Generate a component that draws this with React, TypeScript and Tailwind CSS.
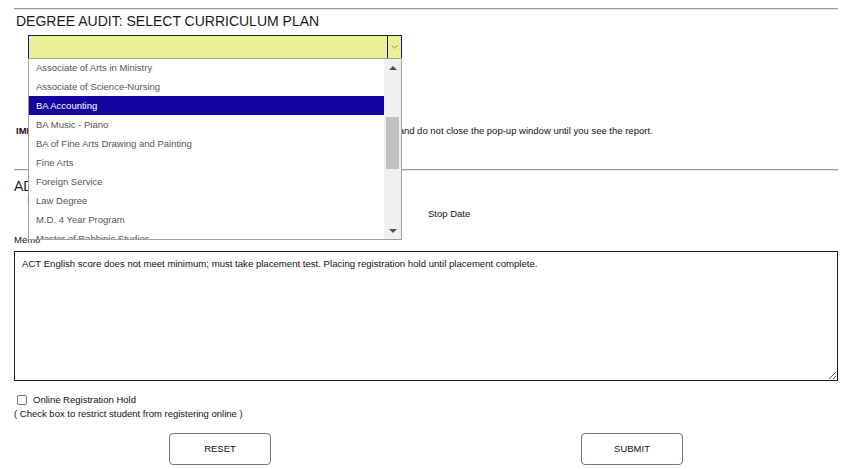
import React from "react";

const items = [
  "Associate of Arts in Ministry",
  "Associate of Science-Nursing",
  "BA Accounting",
  "BA Music - Piano",
  "BA of Fine Arts Drawing and Painting",
  "Fine Arts",
  "Foreign Service",
  "Law Degree",
  "M.D. 4 Year Program",
  "Master of Rabbinic Studies",
];

export default function App() {
  return (
    <div className="w-[850px] h-[469px] bg-white overflow-hidden font-['Liberation_Sans',Arial,sans-serif] text-[#111]">
      <div className="flex flex-col pl-[14px] pr-[12px] pt-[8px]">
        <div className="h-[2px] border-t border-t-[#9a9a9a] border-b border-b-[#e6e6e6]" />
        <div className="mt-[3px] ml-[2px] text-[14px] leading-[16px] text-[#1a1a1a]">
          DEGREE AUDIT: SELECT CURRICULUM PLAN
        </div>

        <div className="relative mt-[6px] ml-[14px] w-[374px] h-[24px] border border-[#1a0f8c] bg-[#e9ef9b] flex">
          <div className="flex-1" />
          <div className="w-[14px] border-l border-[#1a0f8c] flex items-center justify-center">
            <svg width="7" height="4" viewBox="0 0 7 4">
              <path d="M0.5 0.5 L3.5 3.2 L6.5 0.5" stroke="#8a8a8a" strokeWidth="1" fill="none" />
            </svg>
          </div>

          <div className="absolute left-[-1px] top-[22px] w-[374px] h-[182px] border border-[#a0a0a0] bg-white flex z-10">
            <div className="flex-1 overflow-hidden">
              <div className="-mt-px flex flex-col">
                {items.map((t) => (
                  <div
                    key={t}
                    className={
                      t === "BA Accounting"
                        ? "h-[19px] leading-[19px] pl-[7px] text-[9.5px] whitespace-nowrap bg-[#1405a0] text-white"
                        : "h-[19px] leading-[19px] pl-[7px] text-[9.5px] whitespace-nowrap text-[#555]"
                    }
                  >
                    {t}
                  </div>
                ))}
              </div>
            </div>
            <div className="w-[17px] bg-[#f0f0f0] flex flex-col items-center">
              <div className="h-[17px] flex items-center justify-center">
                <svg width="8" height="4" viewBox="0 0 8 4">
                  <path d="M0 4 L4 0 L8 4 Z" fill="#505050" />
                </svg>
              </div>
              <div className="mt-[41px] w-[13px] h-[52px] bg-[#c1c1c1]" />
              <div className="flex-1" />
              <div className="h-[17px] flex items-center justify-center">
                <svg width="8" height="4" viewBox="0 0 8 4">
                  <path d="M0 0 L8 0 L4 4 Z" fill="#505050" />
                </svg>
              </div>
            </div>
          </div>
        </div>

        <div className="mt-[66px] ml-[2px] text-[9.5px] leading-[12px] whitespace-nowrap">
          <span className="font-bold">IMPORTANT:</span> Please click the Submit button only once and wait patiently for these results, and do not close the pop-up window until you see the report.
        </div>

        <div className="mt-[32px] h-[2px] border-t border-t-[#9a9a9a] border-b border-b-[#e6e6e6]" />

        <div className="mt-[7px] text-[14px] leading-[16px] text-[#1a1a1a]">ADD HOLD</div>

        <div className="grid grid-cols-2">
          <div className="pl-[13px] text-[9.5px] leading-[12px]">Start Date</div>
          <div className="pl-[2px] mt-[14px] text-[9.5px] leading-[12px]">Stop Date</div>
        </div>

        <div className="mt-[14px] text-[9.5px] leading-[12px]">Memo</div>
        <textarea
          className="mt-[5px] w-[824px] h-[130px] border border-[#222] px-[7px] py-[6px] text-[9.6px] leading-[12px] text-[#111] outline-none font-['Liberation_Sans',Arial,sans-serif]"
          defaultValue="ACT English score does not meet minimum; must take placement test. Placing registration hold until placement complete."
        />

        <div className="mt-[13px] flex items-center h-[12px] pl-[3px]">
          <span className="w-[10px] h-[10px] border border-[#767676] rounded-[2px] bg-white" />
          <span className="ml-[6px] text-[9.5px] leading-[12px]">Online Registration Hold</span>
        </div>
        <div className="mt-[2px] text-[9.5px] leading-[12px]">( Check box to restrict student from registering online )</div>

        <div className="mt-[13px] grid grid-cols-2 w-[824px]">
          <div className="flex justify-center">
            <button className="w-[102px] h-[32px] border border-[#767676] rounded-[4px] bg-white text-[9.5px] text-[#111]">RESET</button>
          </div>
          <div className="flex justify-center">
            <button className="w-[102px] h-[32px] border border-[#767676] rounded-[4px] bg-white text-[9.5px] text-[#111]">SUBMIT</button>
          </div>
        </div>
      </div>
    </div>
  );
}
